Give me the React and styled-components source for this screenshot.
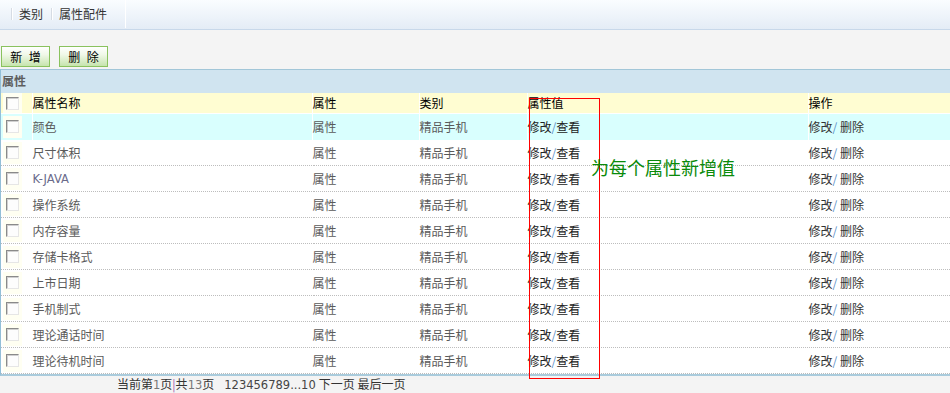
import React from "react";
import styled, { createGlobalStyle } from "styled-components";

const Global = createGlobalStyle`
  html, body { margin: 0; padding: 0; background: #f4f4f4; }
  body { font-family: "Liberation Sans", "Noto Sans CJK SC", sans-serif; font-size: 12px; color: #333; }
`;

const Page = styled.div`
  position: relative;
  width: 950px;
  height: 393px;
  overflow: hidden;
  background: #f4f4f4;
`;

const NavBar = styled.div`
  height: 30px;
  border-bottom: 1px solid #c8d8ea;
  background: linear-gradient(#fafdff, #e4ecf6);
  display: flex;
  align-items: center;
  padding-left: 11px;
  padding-bottom: 2px;
  box-sizing: border-box;
`;

const NavSep = styled.span`
  width: 1px;
  height: ${p => p.$tall ? "28px" : "12px"};
  background: ${p => p.$tall ? "#ffffff" : "#d6dce4"};
  box-shadow: ${p => p.$tall ? "none" : "1px 0 0 #ffffff"};
  align-self: ${p => p.$tall ? "flex-start" : "center"};
`;

const NavItem = styled.span`
  color: #333;
  padding: 0 ${p => p.$pr}px 0 7px;
`;

const Toolbar = styled.div`
  display: flex;
  gap: 9px;
  padding: 16px 0 0 1px;
  height: 39px;
  box-sizing: border-box;
`;

const Btn = styled.button`
  width: 49px;
  height: 21px;
  border: 1px solid #8ac25e;
  background: linear-gradient(#ffffff, #f0f8e8 40%, #c6e4ad);
  font-family: "Noto Sans CJK SC", sans-serif;
  font-size: 12px;
  color: #000;
  padding: 0 0 0 2px;
  letter-spacing: 2px;
  line-height: 19px;
`;

const Panel = styled.div`
  border-top: 1px solid #a2c6d8;
  border-left: 1px solid #93bfd7;
  border-bottom: 2px solid #a9cbdc;
  background: #fff;
`;

const TitleBar = styled.div`
  height: 23px;
  background: #d0e4f0;
  font-weight: bold;
  color: #5e5e5e;
  font-family: "Noto Sans CJK SC", sans-serif;
  font-size: 12px;
  line-height: 22px;
  padding-left: 1px;
`;

const Table = styled.table`
  width: 949px;
  border-collapse: collapse;
  table-layout: fixed;
  font-family: "Noto Sans CJK SC", sans-serif;
  font-size: 12px;
`;

const HeadRow = styled.tr`
  background: #fffdd2;
  height: 20px;
  border-bottom: 1px solid #fff;
`;

const Row = styled.tr`
  background: ${p => p.$hi ? "#d9fffe" : "#fff"};
  height: 26px;
  border-bottom: 1px dotted ${p => p.$hi ? "#d9fffe" : "#bdbdbd"};
`;

const Cell = styled.td`
  padding: 0;
  border-left: ${p => p.$first ? "none" : "1px solid #fff"};
  color: ${p => p.$head ? "#000" : p.$c || "#5a5a5a"};
  white-space: nowrap;
  vertical-align: middle;
  line-height: 14px;
`;

const CheckWrap = styled.div`
  margin-left: 2px;
  width: 19px;
  height: ${p => p.$h}px;
  background: #fffff2;
  display: flex;
  align-items: center;
  justify-content: center;
`;

const Check = styled.span`
  display: block;
  width: 13px;
  height: 13px;
  box-sizing: border-box;
  border-style: solid;
  border-width: 1px;
  border-color: #8a8a8a #e6e6e6 #e6e6e6 #8a8a8a;
  background: #fdfdfd;
  box-shadow: inset 1px 1px 0 #d0d0d0;
`;

const Latin = styled.span`
  font-family: "DejaVu Sans", "Noto Sans CJK SC", sans-serif;
  font-size: 11.5px;
  color: #6a6a8a;
`;

const Slash = styled.span`
  color: #5b8fc9;
`;

const Pager = styled.div`
  height: 17px;
  padding-left: 117px;
  line-height: 15px;
  font-family: "Noto Sans CJK SC", sans-serif;
  color: #333;
  white-space: nowrap;
`;

const Num = styled.span`
  color: #777;
  font-family: "DejaVu Sans", sans-serif;
  font-size: 11.5px;
`;

const Bar = styled.span`
  color: #a05ab0;
`;

const Pages = styled.span`
  font-family: "DejaVu Sans", sans-serif;
  font-size: 11.5px;
  color: #444;
  margin-left: 10px;
  margin-right: 3px;
`;

const RedBox = styled.div`
  position: absolute;
  left: 529px;
  top: 98px;
  width: 69px;
  height: 279px;
  border: 1px solid #ff0000;
  pointer-events: none;
`;

const Note = styled.div`
  position: absolute;
  left: 591px;
  top: 156px;
  font-family: "Noto Sans CJK SC", sans-serif;
  font-size: 18px;
  line-height: 22px;
  color: #0a8a0a;
  white-space: nowrap;
`;

const rows = [
  "颜色", "尺寸体积", "K-JAVA", "操作系统", "内存容量",
  "存储卡格式", "上市日期", "手机制式", "理论通话时间", "理论待机时间",
];

export default function App() {
  return (
    <Page>
      <Global />
      <NavBar>
        <NavSep />
        <NavItem $pr={8}>类别</NavItem>
        <NavSep />
        <NavItem $pr={18}>属性配件</NavItem>
        <NavSep $tall />
      </NavBar>
      <Toolbar>
        <Btn>新 增</Btn>
        <Btn>删 除</Btn>
      </Toolbar>
      <Panel>
        <TitleBar>属性</TitleBar>
        <Table>
          <colgroup>
            <col style={{ width: 31 }} />
            <col style={{ width: 280 }} />
            <col style={{ width: 107 }} />
            <col style={{ width: 108 }} />
            <col style={{ width: 281 }} />
            <col />
          </colgroup>
          <thead>
            <HeadRow>
              <Cell $first $head><CheckWrap $h={20}><Check /></CheckWrap></Cell>
              <Cell $head>属性名称</Cell>
              <Cell $head>属性</Cell>
              <Cell $head>类别</Cell>
              <Cell $head>属性值</Cell>
              <Cell $head>操作</Cell>
            </HeadRow>
          </thead>
          <tbody>
            {rows.map((name, i) => (
              <Row key={name} $hi={i === 0}>
                <Cell $first><CheckWrap $h={22}><Check /></CheckWrap></Cell>
                <Cell>{name === "K-JAVA" ? <Latin>{name}</Latin> : name}</Cell>
                <Cell>属性</Cell>
                <Cell>精品手机</Cell>
                <Cell $c="#222">修改<Slash>/</Slash>查看</Cell>
                <Cell $c="#333">修改<Slash>/</Slash> 删除</Cell>
              </Row>
            ))}
          </tbody>
        </Table>
      </Panel>
      <Pager>
        当前第<Num>1</Num>页<Bar>|</Bar>共<Num>13</Num>页
        <Pages>123456789...10</Pages>下一页 最后一页
      </Pager>
      <RedBox />
      <Note>为每个属性新增值</Note>
    </Page>
  );
}
